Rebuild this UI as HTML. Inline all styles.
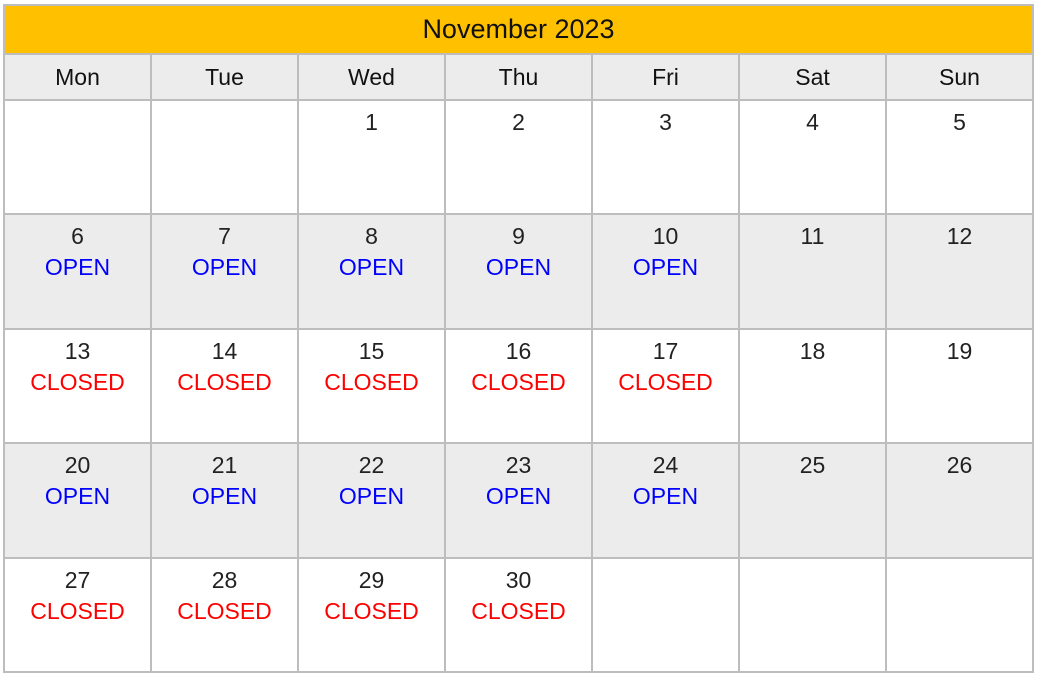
<!DOCTYPE html>
<html><head><meta charset="utf-8"><style>
body{margin:0;width:1040px;height:676px;background:#fff;font-family:"Liberation Sans",sans-serif;overflow:hidden}
table{position:absolute;left:3px;top:4px;width:1031px;border-collapse:collapse;table-layout:fixed}
td,th{border:2px solid #bdbdbd;text-align:center;padding:0;vertical-align:top}
th.t{background:#ffc000;height:47px;font-weight:normal;font-size:27px;vertical-align:middle;color:#111}
th.d{background:#ececec;height:44px;font-weight:normal;font-size:23px;vertical-align:middle;color:#111}
td{height:112.4px;font-size:23px;color:#222}
tr.g td{background:#ececec}
.n{display:block;margin-top:8px;height:28px}
.o{display:block;color:#0000ff;font-size:23px;margin-top:3px}
.c{display:block;color:#ff0000;font-size:23px;margin-top:3px}
</style></head><body>
<table>
<tr><th class="t" colspan="7">November 2023</th></tr>
<tr><th class="d">Mon</th><th class="d">Tue</th><th class="d">Wed</th><th class="d">Thu</th><th class="d">Fri</th><th class="d">Sat</th><th class="d">Sun</th></tr>
<tr><td></td><td></td><td><span class="n">1</span></td><td><span class="n">2</span></td><td><span class="n">3</span></td><td><span class="n">4</span></td><td><span class="n">5</span></td></tr>
<tr class="g"><td><span class="n">6</span><span class="o">OPEN</span></td><td><span class="n">7</span><span class="o">OPEN</span></td><td><span class="n">8</span><span class="o">OPEN</span></td><td><span class="n">9</span><span class="o">OPEN</span></td><td><span class="n">10</span><span class="o">OPEN</span></td><td><span class="n">11</span></td><td><span class="n">12</span></td></tr>
<tr><td><span class="n">13</span><span class="c">CLOSED</span></td><td><span class="n">14</span><span class="c">CLOSED</span></td><td><span class="n">15</span><span class="c">CLOSED</span></td><td><span class="n">16</span><span class="c">CLOSED</span></td><td><span class="n">17</span><span class="c">CLOSED</span></td><td><span class="n">18</span></td><td><span class="n">19</span></td></tr>
<tr class="g"><td><span class="n">20</span><span class="o">OPEN</span></td><td><span class="n">21</span><span class="o">OPEN</span></td><td><span class="n">22</span><span class="o">OPEN</span></td><td><span class="n">23</span><span class="o">OPEN</span></td><td><span class="n">24</span><span class="o">OPEN</span></td><td><span class="n">25</span></td><td><span class="n">26</span></td></tr>
<tr><td><span class="n">27</span><span class="c">CLOSED</span></td><td><span class="n">28</span><span class="c">CLOSED</span></td><td><span class="n">29</span><span class="c">CLOSED</span></td><td><span class="n">30</span><span class="c">CLOSED</span></td><td></td><td></td><td></td></tr>
</table>
</body></html>
